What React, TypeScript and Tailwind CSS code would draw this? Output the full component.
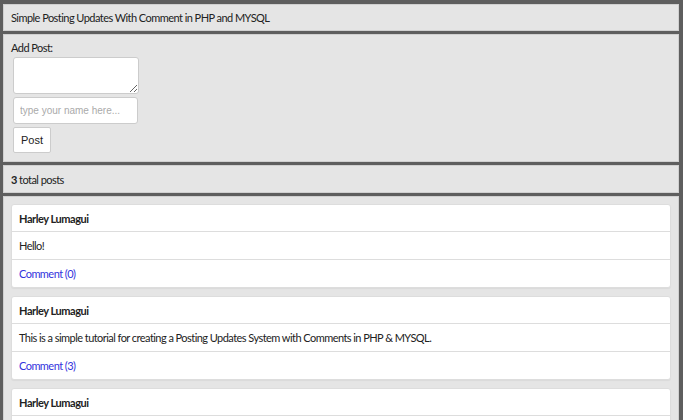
import React from "react";

const posts = [
  { name: "Harley Lumagui", body: "Hello!", comments: 0 },
  {
    name: "Harley Lumagui",
    body: "This is a simple tutorial for creating a Posting Updates System with Comments in PHP & MYSQL.",
    comments: 3,
  },
];

function Card({ name, children }: { name: string; children?: React.ReactNode }) {
  return (
    <div className="bg-white border border-[#ddd] rounded-[3px] shadow-[0_1px_1px_rgba(0,0,0,0.05)]">
      <div className="h-[27px] flex items-center px-[7px] font-bold text-[11px] tracking-[-0.45px] border-b border-[#ddd]">
        {name}
      </div>
      {children}
    </div>
  );
}

export default function App() {
  return (
    <div
      className="h-[420px] overflow-hidden bg-[#5e5e5e] pl-[3px] pr-[4px] pt-[4px] text-[#222] text-[11px] leading-none tracking-[-0.55px]"
      style={{ fontFamily: 'Lato, "Open Sans", sans-serif' }}
    >
      <div className="flex flex-col gap-[3px]">
        <div className="h-[27px] bg-[#e5e5e5] border border-[#d0d0d0] flex items-center pl-[7px]">
          Simple Posting Updates With Comment in PHP and MYSQL
        </div>
        <div className="h-[128px] bg-[#e5e5e5] border border-[#d0d0d0] pl-[7px] pt-[7px]">
          <div>Add Post:</div>
          <div className="mt-[4px] ml-[2px] flex flex-col items-start gap-[3px] tracking-normal">
            <textarea className="w-[126px] h-[37px] bg-white border border-[#ccc] rounded-[3px] resize-y block" />
            <input
              className="w-[125px] h-[27px] bg-white border border-[#ccc] rounded-[3px] px-[6px] text-[10px] placeholder:text-[#aaa]"
              style={{ fontFamily: '"Liberation Sans", Arial, sans-serif' }}
              placeholder="type your name here..."
            />
            <button
              className="h-[26px] px-[7px] bg-white border border-[#ccc] rounded-[2px] text-[11px] text-[#222]"
              style={{ fontFamily: '"Liberation Sans", Arial, sans-serif' }}
            >
              Post
            </button>
          </div>
        </div>
        <div className="h-[28px] bg-[#e5e5e5] border border-[#d0d0d0] flex items-center pl-[7px]">
          <span className="font-bold">3</span>&nbsp;total posts
        </div>
        <div className="bg-[#e5e5e5] border border-[#d0d0d0] pt-[7px] px-[7px] flex flex-col gap-[8px]">
          {posts.map((p, i) => (
            <Card key={i} name={p.name}>
              <div className="h-[28px] flex items-center px-[7px] border-b border-[#ddd]">{p.body}</div>
              <div className="h-[27px] flex items-center px-[7px] text-[#3333dd]">Comment ({p.comments})</div>
            </Card>
          ))}
          <Card name="Harley Lumagui">
            <div className="h-[28px]" />
          </Card>
        </div>
      </div>
    </div>
  );
}
